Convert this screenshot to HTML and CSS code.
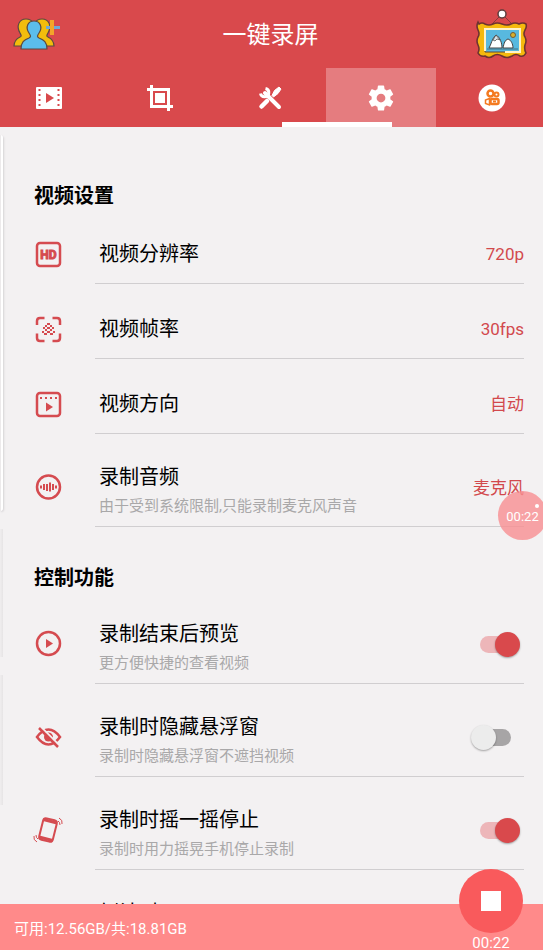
FILE: index.html
```html
<!DOCTYPE html>
<html lang="zh-CN">
<head>
<meta charset="utf-8">
<meta name="viewport" content="width=device-width, initial-scale=1">
<title>一键录屏</title>
<link rel="stylesheet" href="styles.css">
</head>
<body>
<div class="app">
  <header class="header">
    <div class="titlebar">
      <button class="titlebar-button" type="button" aria-label="添加好友">
        <svg width="50" height="36" viewBox="0 0 50 36">
          <g fill="#f2bd0c" stroke="#5b4a42" stroke-width="1.2">
            <path d="M1 29c0-5 2-7 6-9c2-1 1-2 0-4C3 9 6 2 13 2s11 8 6 14c-1 2-1 3 1 4v9z"/>
            <path d="M41 29c0-5-2-7-6-9c-2-1-1-2 0-4c4-7 1-14-6-14s-11 8-6 14c1 2 1 3-1 4v9z"/>
          </g>
          <path d="M8 32c0-7 3-9 8-11c2-1 2-2 0-5c-4-6-1-12 5-12s9 6 5 12c-2 3-2 4 0 5c5 2 8 4 8 11z" fill="#5bbdec" stroke="#5b4a42" stroke-width="1.2"/>
          <path d="M33 10.500h14" stroke="#6da9d8" stroke-width="3"/>
          <path d="M39 3v15" stroke="#f3a52a" stroke-width="4"/>
        </svg>
      </button>
      <h1 class="app-title">一键录屏</h1>
      <button class="titlebar-button" type="button" aria-label="图库">
        <svg width="52" height="54" viewBox="0 0 52 54">
          <path d="M15 17L26 6l11 11" fill="none" stroke="#8a3a3c"/>
          <circle cx="26" cy="6" r="4" fill="#fff" stroke="#5c3b3b" stroke-width="1.500"/>
          <path d="M3 16q3-2 6 0q4 2 8 0q4-2 9 0q5 2 9 0q4-2 8 0q4-2 7 0q1 3-1 6q-2 4 0 7q2 4 0 8q-1 4 1 8q-2 4-6 3q-4-3-8 0q-5 3-10 0q-5-3-9 0q-4 3-8 0q-5 1-7-3q2-4 0-8q-2-4 0-8q2-3 0-7q-2-4 0-8z" fill="#f5b90d" stroke="#6e3430" stroke-width="1.600"/>
          <path d="M9 21h35v23H9z" fill="#58b9df" stroke="#5c4a3d" stroke-width="1"/>
          <path d="M9 43V21h35v23H29" fill="none" stroke="#fff2c8" stroke-width="2"/>
          <circle cx="37" cy="27" r="2.500" fill="#d7b02d" stroke="#735c32"/>
          <path d="M13 40c2-3 3-10 7-13c4 2 6 8 6 13z" fill="#fff" stroke="#444" stroke-width="1"/>
          <path d="M27 40c1-5 2-8 5-9c3 1 5 5 5 9z" fill="#fff" stroke="#444" stroke-width="1"/>
          <path d="M17 32l3-5 4 5-3-1-2 2z" fill="#d7e2e6" stroke="#444" stroke-width=".7"/>
          <path d="M11 41h31" stroke="#47707e"/>
        </svg>
      </button>
    </div>
    <nav class="tabs" aria-label="主导航">
      <a class="tab" href="#videos" aria-label="视频">
        <svg width="28" height="28" viewBox="0 0 28 28"><rect x="1" y="3" width="26" height="22" rx="1" fill="#fff"/><path d="M11 9v10l8-5z" fill="#d9494c"/><path d="M4.500 5v19M23.500 5v19" stroke="#d9494c" stroke-width="2" stroke-dasharray="2 3"/></svg>
      </a>
      <a class="tab" href="#crop" aria-label="裁剪">
        <svg width="28" height="28" viewBox="0 0 28 28"><path d="M1 5.500h21.500V27M5.500 1v21.500H27" fill="none" stroke="#fff" stroke-width="3"/><path d="M9 9h10v10H9z" fill="#fff"/></svg>
      </a>
      <a class="tab" href="#tools" aria-label="工具">
        <svg width="28" height="28" viewBox="0 0 28 28"><path d="M5.500 22.500L11 17" stroke="#fff" stroke-width="4.500" stroke-linecap="round"/><path d="M9 9L23 23" stroke="#fff" stroke-width="4" stroke-linecap="round"/><path d="M9.500 4.500a4.200 4.200 0 1 1-5 5" fill="none" stroke="#fff" stroke-width="3"/><path d="M16 11.500l2.500-5 4.500-3.500 2 2-3 4.500-4.500 3.500z" fill="#fff" stroke="#fff" stroke-linejoin="round"/></svg>
      </a>
      <a class="tab tab-active" href="#settings" aria-label="设置" aria-current="page">
        <svg width="30" height="30" viewBox="0 0 24 24"><path fill="#fff" d="M19.430 12.980c.04-.32.07-.64.07-.98s-.03-.66-.07-.98l2.110-1.650c.19-.15.24-.42.12-.64l-2-3.460c-.12-.22-.39-.3-.61-.22l-2.490 1c-.52-.4-1.080-.73-1.690-.98l-.38-2.650C14.460 2.180 14.250 2 14 2h-4c-.25 0-.46.18-.49.42l-.38 2.650c-.61.25-1.170.59-1.690.98l-2.490-1c-.23-.09-.49 0-.61.22l-2 3.460c-.13.22-.07.49.12.64l2.110 1.650c-.04.32-.07.65-.07.98s.03.66.07.98l-2.110 1.650c-.19.15-.24.42-.12.64l2 3.460c.12.22.39.3.61.22l2.490-1c.52.4 1.080.73 1.690.98l.38 2.650c.03.24.24.42.49.42h4c.25 0 .46-.18.49-.42l.38-2.650c.61-.25 1.170-.59 1.690-.98l2.490 1c.23.09.49 0 .61-.22l2-3.460c.12-.22.07-.49-.12-.64zM12 15.500a3.500 3.500 0 1 1 0-7 3.500 3.500 0 0 1 0 7z"/></svg>
      </a>
      <a class="tab" href="#discover" aria-label="发现">
        <svg width="28" height="28" viewBox="0 0 28 28"><circle cx="14" cy="14" r="13.500" fill="#fff"/><g fill="none" stroke="#f47a20" stroke-width="2"><circle cx="12.500" cy="9.500" r="3" stroke-width="2.500"/><circle cx="18.500" cy="10.500" r="2"/><rect x="12.500" y="15" width="8" height="5" rx="1.500" stroke-width="2.500"/><path d="M11.500 14.500L7.500 16v3.500l4 1.500z" stroke-width="1.500"/><path d="M15 17.500h3"/></g></svg>
      </a>
      <span class="tab-indicator"></span>
    </nav>
  </header>

  <main class="settings">
    <span class="edge edge-bright"></span>
    <span class="edge edge-upper"></span>
    <span class="edge edge-lower"></span>

    <section>
      <h2 class="section-title">视频设置</h2>
      <div class="row">
        <svg class="row-icon" viewBox="0 0 28 28"><rect x="3" y="3" width="23" height="23" rx="3"/><text class="hd" x="14.500" y="19" text-anchor="middle">HD</text></svg>
        <div class="row-body">
          <h3 class="row-title">视频分辨率</h3>
          <button class="row-value" type="button">720p</button>
        </div>
      </div>
      <div class="row">
        <svg class="row-icon" viewBox="0 0 28 28"><path d="M3 10V6q0-3 3-3h4.500M18.500 3H23q3 0 3 3v4M26 18.500V23q0 3-3 3h-4.500M10.500 26H6q-3 0-3-3v-4.500"/><path class="solid" d="M13 8h3v2h-3zM11 10h2v2h-2zM16 10h2v2h-2zM13 12h3v2h-3zM9 12h2v2H9zM18 12h2v2h-2zM11 14h2v2h-2zM16 14h2v2h-2zM8 16h2v2H8zM19 16h2v2h-2zM13 16h3v2h-3zM10 18h3v2h-3zM16 18h3v2h-3z"/></svg>
        <div class="row-body">
          <h3 class="row-title">视频帧率</h3>
          <button class="row-value" type="button">30fps</button>
        </div>
      </div>
      <div class="row">
        <svg class="row-icon" viewBox="0 0 28 28"><rect x="3" y="3" width="23" height="23" rx="3"/><path d="M6 8h17" stroke-width="2" stroke-dasharray="2 3"/><path class="solid" d="M12 12.500v9l7-4.500z"/></svg>
        <div class="row-body">
          <h3 class="row-title">视频方向</h3>
          <button class="row-value" type="button">自动</button>
        </div>
      </div>
      <div class="row row-tall">
        <svg class="row-icon" viewBox="0 0 28 28"><circle cx="14.500" cy="13" r="11.500"/><path d="M7 11.500v3M10 10v6M13 10v7M16 8.500v9M19 10v6M22 11.500v3" stroke-width="2"/></svg>
        <div class="row-body">
          <div class="row-text">
            <h3 class="row-title">录制音频</h3>
            <p class="row-note">由于受到系统限制,只能录制麦克风声音</p>
          </div>
          <button class="row-value" type="button">麦克风</button>
        </div>
      </div>
    </section>

    <section>
      <h2 class="section-title">控制功能</h2>
      <div class="row row-tall">
        <svg class="row-icon" viewBox="0 0 28 28"><circle cx="14.500" cy="12.500" r="11.500"/><path class="solid" d="M12 8v9l7-4.500z"/></svg>
        <div class="row-body">
          <div class="row-text">
            <h3 class="row-title"><label for="preview">录制结束后预览</label></h3>
            <p class="row-note">更方便快捷的查看视频</p>
          </div>
          <input class="switch" type="checkbox" id="preview" checked>
        </div>
      </div>
      <div class="row row-tall">
        <svg class="row-icon" viewBox="0 0 28 28"><path d="M3 13Q8.500 5.500 14.500 5.500T26 13Q20.500 20.500 14.500 20.500T3 13z"/><circle class="solid" cx="14.500" cy="13" r="4.500"/><path d="M7 3L26 22" stroke="#f3f1f2" stroke-width="2"/><path d="M5 4L24 23"/></svg>
        <div class="row-body">
          <div class="row-text">
            <h3 class="row-title"><label for="hide">录制时隐藏悬浮窗</label></h3>
            <p class="row-note">录制时隐藏悬浮窗不遮挡视频</p>
          </div>
          <input class="switch" type="checkbox" id="hide">
        </div>
      </div>
      <div class="row row-tall">
        <svg class="row-icon" viewBox="0 0 28 28"><g transform="rotate(14 14 13)"><rect x="7" y="2" width="14" height="22" rx="3" stroke-width="2"/><path d="M7 4h14M7 22h14" stroke-width="3"/></g><path d="M24 4q2 1 2 4M25 1q4 2 3 6M4 22q-2-1-2-4M3 25q-4-2-3-6" stroke-width="1"/></svg>
        <div class="row-body">
          <div class="row-text">
            <h3 class="row-title"><label for="shake">录制时摇一摇停止</label></h3>
            <p class="row-note">录制时用力摇晃手机停止录制</p>
          </div>
          <input class="switch" type="checkbox" id="shake" checked>
        </div>
      </div>
      <div class="row row-tall">
        <span class="row-icon"></span>
        <div class="row-body">
          <div class="row-text">
            <h3 class="row-title">倒计时</h3>
          </div>
        </div>
      </div>
    </section>
  </main>

  <footer class="footer">
    <p class="storage">可用:12.56GB/共:18.81GB</p>
    <div class="recorder">
      <button class="stop" type="button" aria-label="停止录制"><span class="stop-mark"></span></button>
      <span class="time">00:22</span>
    </div>
  </footer>
  <div class="bubble">00:22</div>
</div>
</body>
</html>
```
FILE: styles.css
```css
* {
  box-sizing: border-box;
}

body {
  margin: 0;
  background: #f3f1f2;
  color: #000;
  font-family: Roboto, "Noto Sans CJK SC", sans-serif;
}

h1, h2, h3, p {
  margin: 0;
}

button {
  padding: 0;
  border: 0;
  background: none;
  font: inherit;
  cursor: pointer;
}

svg {
  display: block;
}

.app {
  position: relative;
  display: flex;
  flex-direction: column;
  height: 100vh;
  overflow: hidden;
}

.header {
  flex: none;
  overflow: hidden;
  background: #d9494c;
}

.titlebar {
  display: grid;
  grid-template-columns: 52px 1fr 52px;
  align-items: center;
  height: 68px;
  padding: 2px 15px 0 13px;
}

.app-title {
  color: #fff;
  font-size: 24px;
  font-weight: 400;
  line-height: 32px;
  text-align: center;
}

.tabs {
  position: relative;
  display: flex;
  height: 59px;
  margin: 0 -4px 0 -6px;
}

.tab {
  display: flex;
  flex: 1;
  align-items: center;
  justify-content: center;
}

.tab-active {
  background: #e57c7f;
}

.tab-indicator {
  position: absolute;
  bottom: 0;
  left: 52%;
  width: 20%;
  height: 5px;
  background: #fff;
}

.settings {
  position: relative;
  flex: 1;
  min-height: 0;
  padding-top: 18px;
  overflow: hidden;
}

.edge {
  position: absolute;
  left: 0;
  width: 3px;
  background: linear-gradient(to right, #f0eeef, #e6e4e5);
}

.edge-bright {
  top: 8px;
  height: 376px;
  border-radius: 0 3px 3px 0;
  background: linear-gradient(to right, #eceaeb 1px, #fff 1px);
  box-shadow: 1px 1px 2px #d6d4d5;
}

.edge-upper {
  top: 402px;
  height: 128px;
}

.edge-lower {
  top: 548px;
  height: 130px;
}

.section-title {
  padding: 39px 34px 0;
  font-size: 20px;
  font-weight: 700;
  line-height: 25px;
}

.row {
  display: flex;
  align-items: center;
  padding: 15px 19px 0 34px;
}

.row-icon {
  flex: none;
  width: 28px;
  height: 28px;
  margin-right: 33px;
  overflow: visible;
  fill: none;
  stroke: #d54b50;
  stroke-width: 2.5;
}

.row-icon .solid {
  fill: #d54b50;
  stroke: none;
}

.row-icon .hd {
  fill: #d54b50;
  stroke-width: 1;
  font-size: 12px;
  font-weight: 700;
}

.row-body {
  display: flex;
  flex: 1;
  align-items: center;
  justify-content: space-between;
  height: 60px;
  padding-left: 4px;
  border-bottom: 1px solid #d0ced0;
}

.row-tall .row-body {
  height: 78px;
}

.row-text {
  min-height: 64px;
  padding-top: 6px;
}

.row-title {
  font-size: 20px;
  font-weight: 400;
  line-height: 30px;
}

.row-note {
  color: #a9a8a9;
  font-size: 15px;
  line-height: 28px;
}

.row-value {
  color: #d2494d;
  font-size: 17px;
  line-height: 24px;
}

.switch {
  position: relative;
  width: 49px;
  height: 25px;
  margin: 0 4px 0 0;
  appearance: none;
  cursor: pointer;
}

.switch::before {
  position: absolute;
  top: 4px;
  right: 9px;
  left: 9px;
  height: 17px;
  border-radius: 9px;
  background: #a7a5a6;
  content: "";
}

.switch::after {
  position: absolute;
  top: 0;
  left: 0;
  width: 25px;
  height: 25px;
  border-radius: 50%;
  background: #ececec;
  box-shadow: 0 1px 2px #0005;
  content: "";
}

.switch:checked::before {
  background: #edb6b9;
}

.switch:checked::after {
  right: 0;
  left: auto;
  background: #d9494c;
}

.footer {
  position: relative;
  display: flex;
  flex: none;
  align-items: center;
  height: 46px;
  padding: 4px 14px 0;
  background: #ff8a8a;
  color: #fff;
}

.storage {
  font-size: 15px;
  line-height: 24px;
}

.recorder {
  position: absolute;
  top: -35px;
  right: 20px;
  display: flex;
  flex-direction: column;
  align-items: center;
}

.stop {
  display: flex;
  align-items: center;
  justify-content: center;
  width: 64px;
  height: 64px;
  border-radius: 50%;
  background: #f95a5c;
}

.stop-mark {
  width: 20px;
  height: 20px;
  background: #fff;
}

.time {
  font-size: 15px;
  line-height: 20px;
}

.bubble {
  position: absolute;
  top: 491px;
  right: -4px;
  width: 49px;
  height: 49px;
  border-radius: 50%;
  background: #f78e91cc;
  color: #fff;
  font-size: 13px;
  line-height: 51px;
  text-align: center;
}

.bubble::after {
  position: absolute;
  top: 13px;
  right: 8px;
  width: 4px;
  height: 4px;
  border-radius: 50%;
  background: #fff;
  content: "";
}
```
